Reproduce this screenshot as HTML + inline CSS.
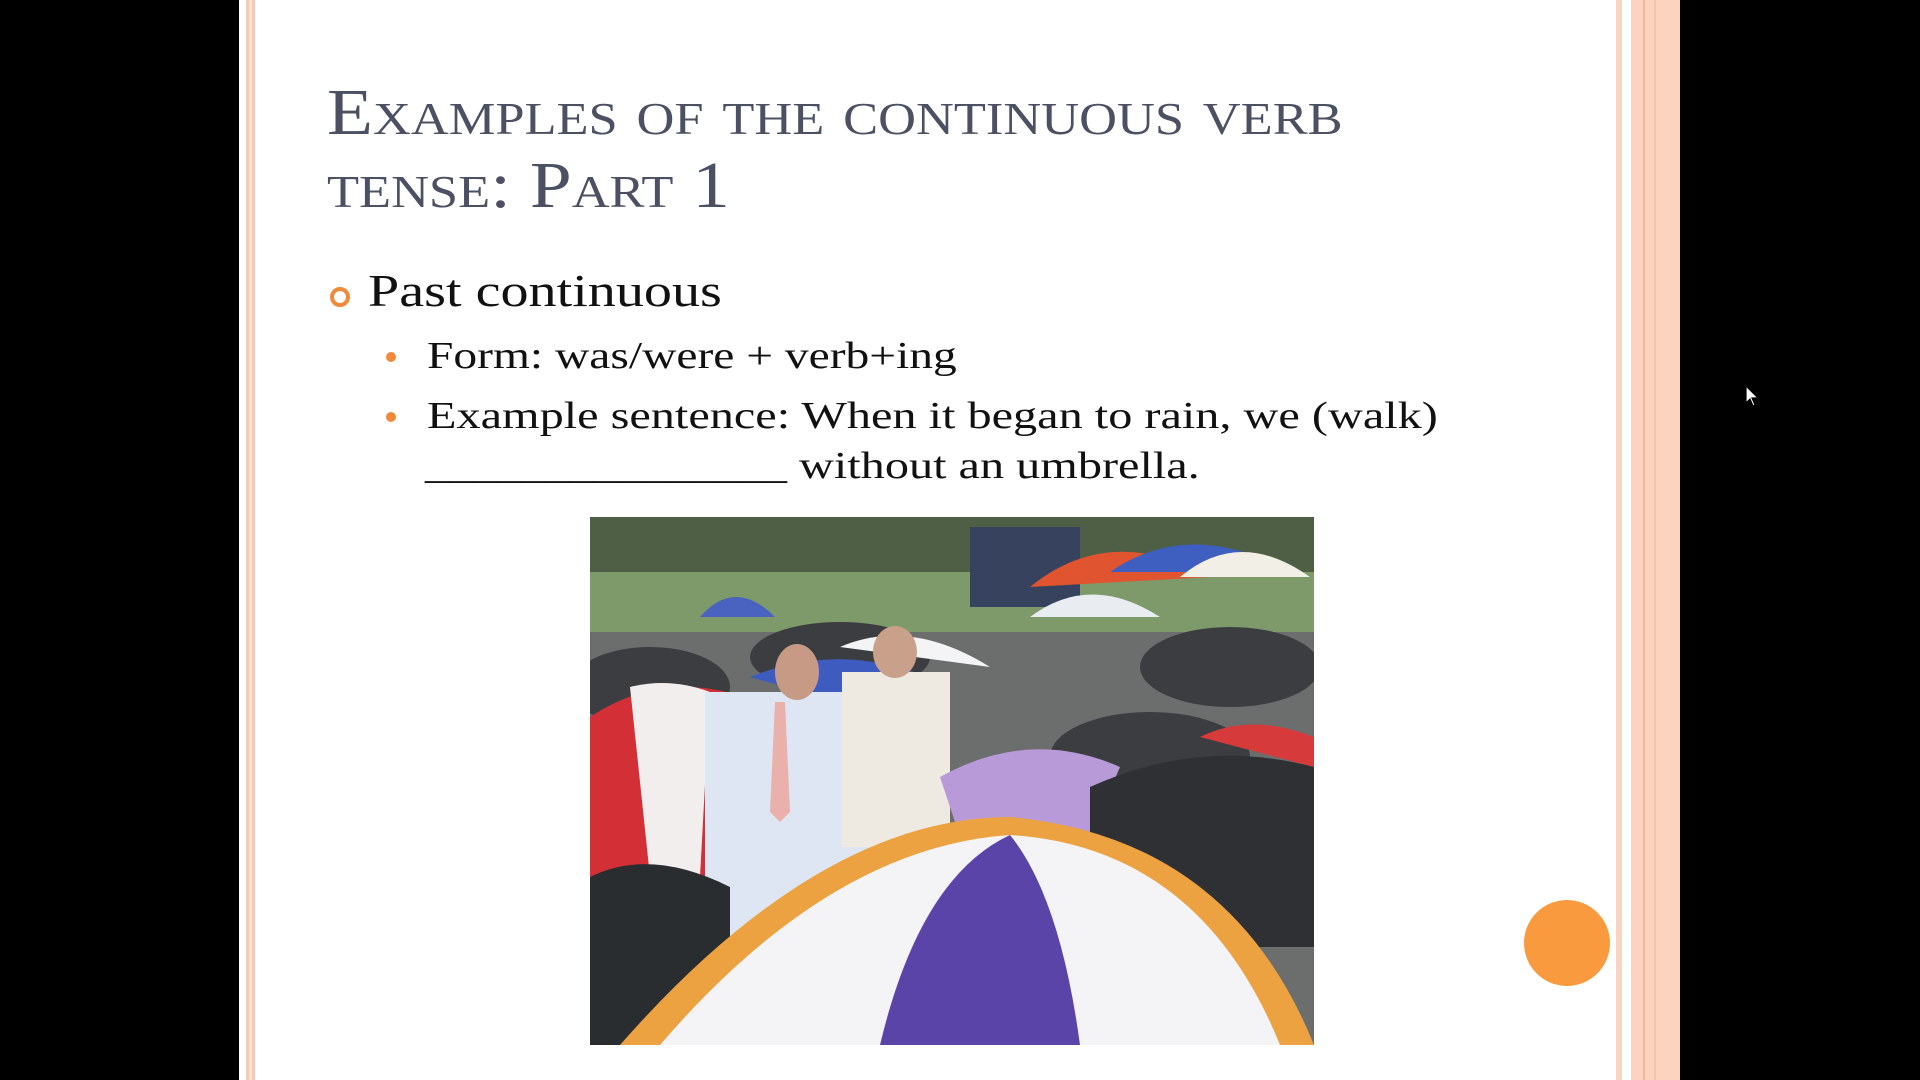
<!DOCTYPE html>
<html><head><meta charset="utf-8"><style>
body{margin:0;width:1920px;height:1080px;background:#000;position:relative;overflow:hidden;font-family:"Liberation Serif",serif}
.slide{position:absolute;left:239px;top:0;width:1441px;height:1080px;background:#fff}
.abs{position:absolute}
.t{position:absolute;left:327px;color:#4b5163;font-size:66px;font-variant:small-caps;white-space:nowrap;line-height:1;transform:scaleX(1.14);transform-origin:0 0}
.txt{position:absolute;color:#111;white-space:nowrap;line-height:1;transform-origin:0 0}
</style></head><body>
<div class="slide"></div>
<div class="abs" style="left:246px;top:0;width:9px;height:1080px;background:#f8c9b2"></div>
<div class="abs" style="left:249px;top:0;width:3px;height:1080px;background:#fde3d6"></div>
<div class="abs" style="left:1616px;top:0;width:6px;height:1080px;background:#f9d3c2"></div>
<div class="abs" style="left:1631px;top:0;width:49px;height:1080px;background:#fcd3bf"></div>
<div class="abs" style="left:1643px;top:0;width:2px;height:1080px;background:#f0b898"></div>
<div class="abs" style="left:1654px;top:0;width:2px;height:1080px;background:#f4c4a8"></div>

<div class="t" style="top:80px">Examples of the continuous verb</div>
<div class="t" style="top:153px">tense: Part 1</div>

<div class="abs" style="left:330px;top:287px;width:12px;height:12px;border:4px solid #f08a3a;border-radius:50%"></div>
<div class="txt" style="left:368px;top:268px;font-size:46px;transform:scaleX(1.22)">Past continuous</div>
<div class="abs" style="left:386px;top:352px;width:10px;height:10px;background:#f08a3a;border-radius:50%"></div>
<div class="txt" style="left:427px;top:337px;font-size:38px;transform:scaleX(1.25)">Form: was/were + verb+ing</div>
<div class="abs" style="left:386px;top:412px;width:10px;height:10px;background:#f08a3a;border-radius:50%"></div>
<div class="txt" style="left:427px;top:397px;font-size:38px;transform:scaleX(1.27)">Example sentence: When it began to rain, we (walk)</div>
<div class="txt" style="left:425px;top:447px;font-size:38px;transform:scaleX(1.27)">_______________ without an umbrella.</div>

<svg class="abs" style="left:590px;top:517px" width="724" height="528" viewBox="0 0 724 528">
<rect width="724" height="528" fill="#6b6e6c"/>
<rect width="724" height="70" fill="#4f5f45"/>
<rect y="55" width="724" height="60" fill="#7e9a6a"/>
<rect x="380" y="10" width="110" height="80" fill="#37435e"/>
<path d="M440 70 Q520 5 620 60Z" fill="#e0552f"/>
<path d="M520 55 Q600 0 700 55Z" fill="#3f5fc0"/>
<path d="M590 60 Q650 10 720 60Z" fill="#f1efe6"/>
<path d="M440 100 Q500 55 570 100Z" fill="#e9ecf0"/>
<path d="M110 100 Q145 60 185 100Z" fill="#4a62c0"/>
<g fill="#3c3d40"><ellipse cx="60" cy="170" rx="80" ry="40"/><ellipse cx="250" cy="140" rx="90" ry="35"/><ellipse cx="640" cy="150" rx="90" ry="40"/><ellipse cx="560" cy="240" rx="100" ry="45"/><ellipse cx="680" cy="310" rx="80" ry="60"/></g>
<path d="M160 160 Q260 120 360 170 L300 200Z" fill="#3e5cc0"/>
<path d="M250 130 Q320 100 400 150Z" fill="#f4f4f6"/>
<path d="M610 220 Q660 195 724 220 L724 250Z" fill="#d63a3a"/>
<path d="M0 200 Q90 140 200 200 L200 360 0 360Z" fill="#d22f36"/>
<path d="M40 170 Q80 160 120 175 L110 360 60 360Z" fill="#f3eeee"/>
<rect x="115" y="175" width="190" height="260" fill="#dde6f2"/>
<path d="M185 185 l10 0 5 110 -10 10 -10 -10Z" fill="#eab0ac"/>
<ellipse cx="207" cy="155" rx="22" ry="28" fill="#c79a86"/>
<rect x="252" y="155" width="108" height="175" fill="#eeeae2"/>
<ellipse cx="305" cy="135" rx="22" ry="26" fill="#c9a08a"/>
<path d="M350 260 Q440 210 530 250 L500 320 370 320Z" fill="#b99ad8"/>
<path d="M500 270 Q610 220 724 250 L724 430 500 430Z" fill="#2f3033"/>
<path d="M0 360 Q60 330 140 370 L140 528 0 528Z" fill="#2a2d30"/>
<path d="M30 528 Q230 300 420 300 Q640 320 724 528Z" fill="#eca241"/>
<path d="M70 528 Q240 330 420 318 Q610 330 690 528Z" fill="#f4f3f6"/>
<path d="M290 528 Q330 360 420 318 Q470 380 490 528Z" fill="#5a44a8"/>
</svg>

<div class="abs" style="left:1524px;top:900px;width:86px;height:86px;background:#f99a3e;border-radius:50%"></div>
<svg class="abs" style="left:1745px;top:385px" width="16" height="24" viewBox="0 0 16 24"><path d="M1 1 L1 18 L5 14 L8 21 L10 20 L7 13 L13 13Z" fill="#fff" stroke="#000" stroke-width="1.2"/></svg>
</body></html>
